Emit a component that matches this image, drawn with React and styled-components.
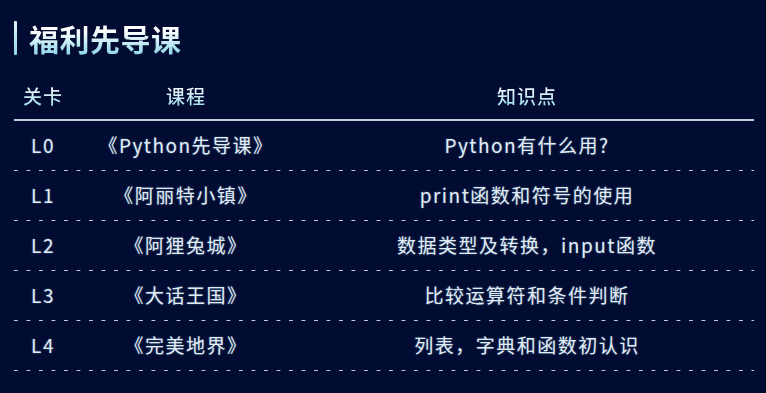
import React from 'react'
import styled, { createGlobalStyle } from 'styled-components'

const Global = createGlobalStyle`
  html, body {
    margin: 0;
    padding: 0;
    background: #020c33;
  }
`

const Page = styled.div`
  width: 766px;
  height: 393px;
  box-sizing: border-box;
  padding: 20px 12px 0 14px;
  background: #020c33;
  font-family: "Noto Sans CJK SC", "Noto Sans", sans-serif;
  overflow: hidden;
`

const TitleRow = styled.div`
  display: flex;
  align-items: center;
  gap: 12px;
  height: 36px;
`

const Bar = styled.div`
  width: 3px;
  height: 34px;
  border-radius: 1px;
  background: linear-gradient(180deg, #e8f4fa 0%, #8ad6e6 100%);
`

const Title = styled.h1`
  margin: 0;
  font-size: 30px;
  font-weight: 700;
  letter-spacing: 0.5px;
  line-height: 36px;
  background: linear-gradient(180deg, #ffffff 30%, #86d4e6 100%);
  -webkit-background-clip: text;
  background-clip: text;
  color: transparent;
`

const Table = styled.div`
  margin-top: 22px;
`

const Row = styled.div`
  display: grid;
  grid-template-columns: 58px 228px 1fr;
  align-items: center;
  height: ${p => (p.$head ? '43px' : '50px')};
  background-image: ${p =>
    p.$head
      ? 'linear-gradient(#c4cad8, #c4cad8)'
      : 'linear-gradient(90deg, #c4ccda 0 4px, transparent 4px 100%)'};
  background-size: ${p => (p.$head ? '100% 2px' : '12.5px 1.5px')};
  background-repeat: ${p => (p.$head ? 'no-repeat' : 'repeat-x')};
  background-position: left bottom;
`

const Cell = styled.div`
  text-align: center;
  padding-bottom: 3px;
  font-size: 19px;
  letter-spacing: 1.5px;
  white-space: nowrap;
  color: #e2ecf4;
  text-shadow: 0 0 2px rgba(140, 200, 230, 0.5);
`

const HeadCell = styled.div`
  display: flex;
  justify-content: center;
  padding-bottom: 8px;
  font-size: 19px;
  font-weight: 500;
  letter-spacing: 1px;
`

const HeadText = styled.span`
  background: linear-gradient(180deg, #f4fbff 20%, #8fd6e6 100%);
  -webkit-background-clip: text;
  background-clip: text;
  color: transparent;
`

const lessons = [
  ['L0', '《Python先导课》', 'Python有什么用?'],
  ['L1', '《阿丽特小镇》', 'print函数和符号的使用'],
  ['L2', '《阿狸兔城》', '数据类型及转换，input函数'],
  ['L3', '《大话王国》', '比较运算符和条件判断'],
  ['L4', '《完美地界》', '列表，字典和函数初认识'],
]

export default function App() {
  return (
    <Page>
      <Global />
      <TitleRow>
        <Bar />
        <Title>福利先导课</Title>
      </TitleRow>
      <Table>
        <Row $head>
          <HeadCell><HeadText>关卡</HeadText></HeadCell>
          <HeadCell><HeadText>课程</HeadText></HeadCell>
          <HeadCell><HeadText>知识点</HeadText></HeadCell>
        </Row>
        {lessons.map(([level, course, topic]) => (
          <Row key={level}>
            <Cell>{level}</Cell>
            <Cell>{course}</Cell>
            <Cell>{topic}</Cell>
          </Row>
        ))}
      </Table>
    </Page>
  )
}
